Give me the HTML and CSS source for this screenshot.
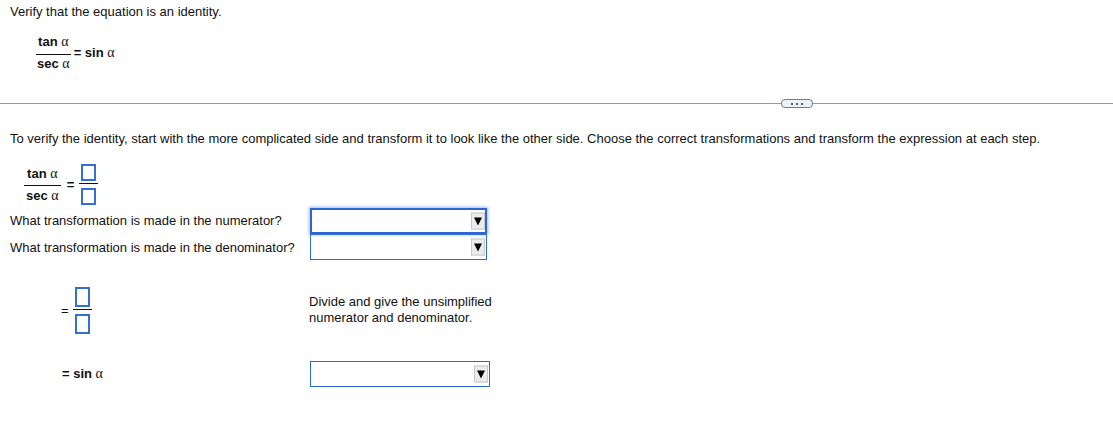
FILE: index.html
```html
<!DOCTYPE html>
<html>
<head>
<meta charset="utf-8">
<link rel="stylesheet" href="styles.css">
</head>
<body>
<div class="question">
  <p class="prompt">Verify that the equation is an identity.</p>
  <div class="given">
    <span class="frac">
      <span class="num">tan <i class="al">α</i></span>
      <span class="den">sec <i class="al">α</i></span>
    </span>
    <span class="rhs">= sin <i class="al">α</i></span>
  </div>
</div>
<div class="divider"><span class="pill"><span class="dot"></span><span class="dot"></span><span class="dot"></span></span></div>
<div class="solution">
  <p class="instr">To verify the identity, start with the more complicated side and transform it to look like the other side. Choose the correct transformations and transform the expression at each step.</p>
  <div class="step1">
    <span class="frac small">
      <span class="num">tan <i class="al">α</i></span>
      <span class="den">sec <i class="al">α</i></span>
    </span>
    <span class="eqsign">=</span>
    <span class="bfrac">
      <span class="box"></span>
      <span class="box"></span>
    </span>
  </div>
  <div class="rows">
    <span class="label">What transformation is made in the numerator?</span>
    <span class="select focused"><span class="arrow"></span></span>
    <span class="label">What transformation is made in the denominator?</span>
    <span class="select"><span class="arrow"></span></span>
  </div>
  <div class="step2">
    <div class="lhs2">
      <span class="eqsign">=</span>
      <span class="bfrac big">
        <span class="box"></span>
        <span class="box"></span>
      </span>
    </div>
    <p class="hint">Divide and give the unsimplified<br>numerator and denominator.</p>
  </div>
  <div class="step3">
    <span class="final">= sin <i class="al">α</i></span>
    <span class="select wide"><span class="arrow"></span></span>
  </div>
</div>
</body>
</html>
```

FILE: styles.css
```css
html, body {
  margin: 0;
  padding: 0;
  background: #ffffff;
}
body {
  font-family: "Liberation Sans", Arial, sans-serif;
  font-size: 13px;
  color: #111;
  width: 1113px;
  height: 421px;
  overflow: hidden;
}
p { margin: 0; }
.al {
  font-family: "Liberation Serif", "Times New Roman", serif;
  font-style: normal;
  font-weight: normal;
  font-size: 14px;
}
.question {
  padding: 4px 10px 0 10px;
  height: 97px;
  box-sizing: border-box;
}
.prompt {
  line-height: 15px;
}
.given {
  display: flex;
  align-items: center;
  margin-top: 15px;
  margin-left: 25px;
}
.frac {
  display: inline-flex;
  flex-direction: column;
  align-items: center;
  font-weight: bold;
}
.given .frac .num {
  line-height: 15px;
  padding: 0 2px 5px 2px;
  border-bottom: 1px solid #111;
}
.given .frac .den {
  line-height: 15px;
  padding: 1px 2px 0 2px;
}
.rhs {
  font-weight: bold;
  margin-left: 2px;
  margin-top: 1px;
}
.divider {
  position: relative;
  height: 13px;
  display: flex;
  align-items: center;
}
.divider::before {
  content: "";
  flex: 1;
  height: 1px;
  background: #8d99a8;
}
.pill {
  position: absolute;
  left: 781px;
  top: 2px;
  width: 30px;
  height: 7px;
  border: 1px solid #6f7e93;
  border-radius: 4px;
  background: #eef1f5;
  display: flex;
  align-items: center;
  justify-content: center;
  gap: 3px;
}
.dot {
  width: 2px;
  height: 2px;
  background: #555f6e;
}
.solution {
  padding: 0 10px;
}
.instr {
  margin-top: 21px;
  line-height: 15px;
}
.step1 {
  display: flex;
  align-items: center;
  margin-top: 18px;
  margin-left: 13px;
}
.step1 .frac .num {
  line-height: 15px;
  padding: 0 3px 4px 3px;
  border-bottom: 1px solid #111;
}
.step1 .frac .den {
  line-height: 15px;
  padding: 2px 3px 0 3px;
}
.eqsign {
  font-weight: bold;
  margin: 0 5px 0 5px;
}
.bfrac {
  display: inline-flex;
  flex-direction: column;
  align-items: center;
}
.bfrac .box {
  display: block;
  width: 11px;
  height: 13px;
  border: 2px solid #3470d4;
}
.bfrac .box:first-child {
  margin: 0 2px 3px 2px;
  position: relative;
}
.bfrac .box:first-child::after {
  content: "";
  position: absolute;
  left: -4px;
  right: -4px;
  bottom: -5px;
  height: 1px;
  background: #111;
}
.bfrac .box:last-child {
  margin-top: 4px;
}
.bfrac.big .box {
  height: 16px;
}
.rows {
  display: grid;
  grid-template-columns: 300px 177px;
  grid-template-rows: 27px 26px;
  align-items: center;
  margin-top: 2px;
}
.label {
  line-height: 15px;
}
.select {
  position: relative;
  display: block;
  box-sizing: border-box;
  height: 26px;
  border: 1px solid #3169d2;
  background: #fff;
}
.select.focused {
  border: 2px solid #2c66d4;
  box-shadow: 0 0 3px 1px rgba(80, 130, 220, 0.55);
  z-index: 1;
}
.arrow {
  position: absolute;
  right: 1px;
  top: 50%;
  transform: translateY(-50%);
  width: 14px;
  height: 17px;
  background: #ececec;
  border: 1px solid #c8c8c8;
  box-sizing: border-box;
}
.arrow::after {
  content: "";
  position: absolute;
  left: 2px;
  top: 4px;
  border-left: 4px solid transparent;
  border-right: 4px solid transparent;
  border-top: 8px solid #000;
}
.select.focused .arrow { right: 0; }
.step2 {
  display: grid;
  grid-template-columns: 299px auto;
  margin-top: 27px;
  height: 47px;
}
.lhs2 {
  display: flex;
  align-items: center;
  padding-left: 51px;
}
.lhs2 .eqsign { margin: 0 4px 0 0; font-weight: normal; }
.hint {
  line-height: 16px;
  padding-top: 7px;
}
.step3 {
  display: grid;
  grid-template-columns: 300px 180px;
  align-items: center;
  margin-top: 27px;
}
.final {
  font-weight: bold;
  padding-left: 52px;
}
```
